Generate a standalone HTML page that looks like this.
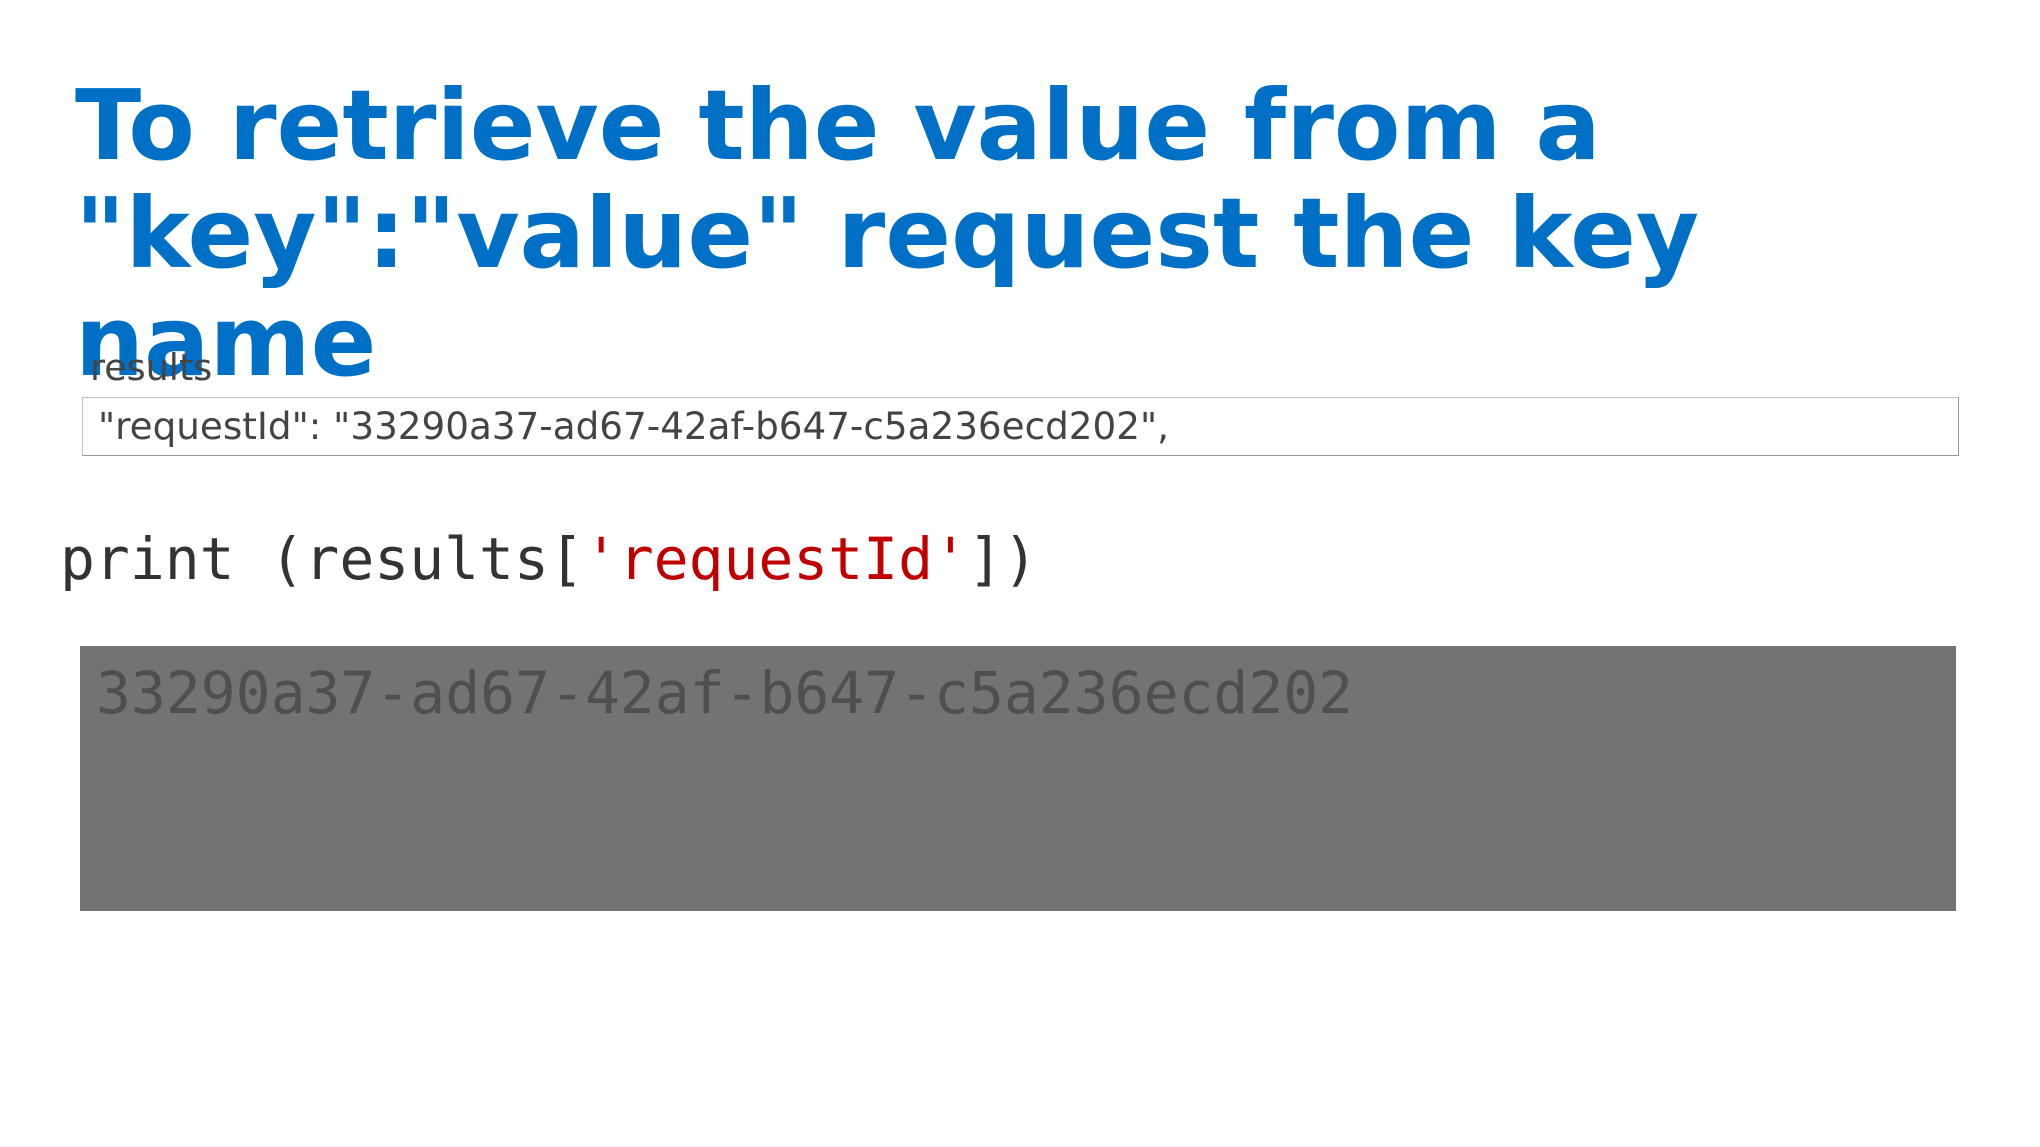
<!DOCTYPE html>
<html><head><meta charset="utf-8"><style>
html,body{margin:0;padding:0;background:#fff;width:2040px;height:1147px;overflow:hidden;position:relative}
.t{position:absolute;left:75px;top:72px;margin:0;font-family:"DejaVu Sans",sans-serif;font-weight:bold;font-size:97px;line-height:108px;color:#0070c6;white-space:nowrap}
.lab{position:absolute;left:90px;top:348px;font-family:"DejaVu Sans",sans-serif;font-size:36.5px;line-height:40px;color:#444}
.box{position:absolute;left:82px;top:397px;width:1877px;height:59px;border:1px solid #c0c0c0;border-bottom-color:#999;border-right-color:#999;box-sizing:border-box;font-family:"DejaVu Sans",sans-serif;font-size:37.3px;line-height:57px;color:#444;padding-left:15px;white-space:nowrap}
.pr{position:absolute;left:60px;top:524px;font-family:"DejaVu Sans Mono",monospace;font-size:58px;line-height:70px;color:#333;white-space:pre}
.pr span{color:#c00000}
.out{position:absolute;left:80px;top:646px;width:1876px;height:265px;background:#737373;font-family:"DejaVu Sans Mono",monospace;font-size:58px;line-height:70px;color:#4f4f4f;padding-left:16px;padding-top:12px;box-sizing:border-box;white-space:pre}
</style></head><body>
<h1 class="t">To retrieve the value from a<br>"key":"value" request the key<br>name</h1>
<div class="lab">results</div>
<div class="box">"requestId": "33290a37-ad67-42af-b647-c5a236ecd202",</div>
<div class="pr">print (results[<span>'requestId'</span>])</div>
<div class="out">33290a37-ad67-42af-b647-c5a236ecd202</div>
</body></html>
